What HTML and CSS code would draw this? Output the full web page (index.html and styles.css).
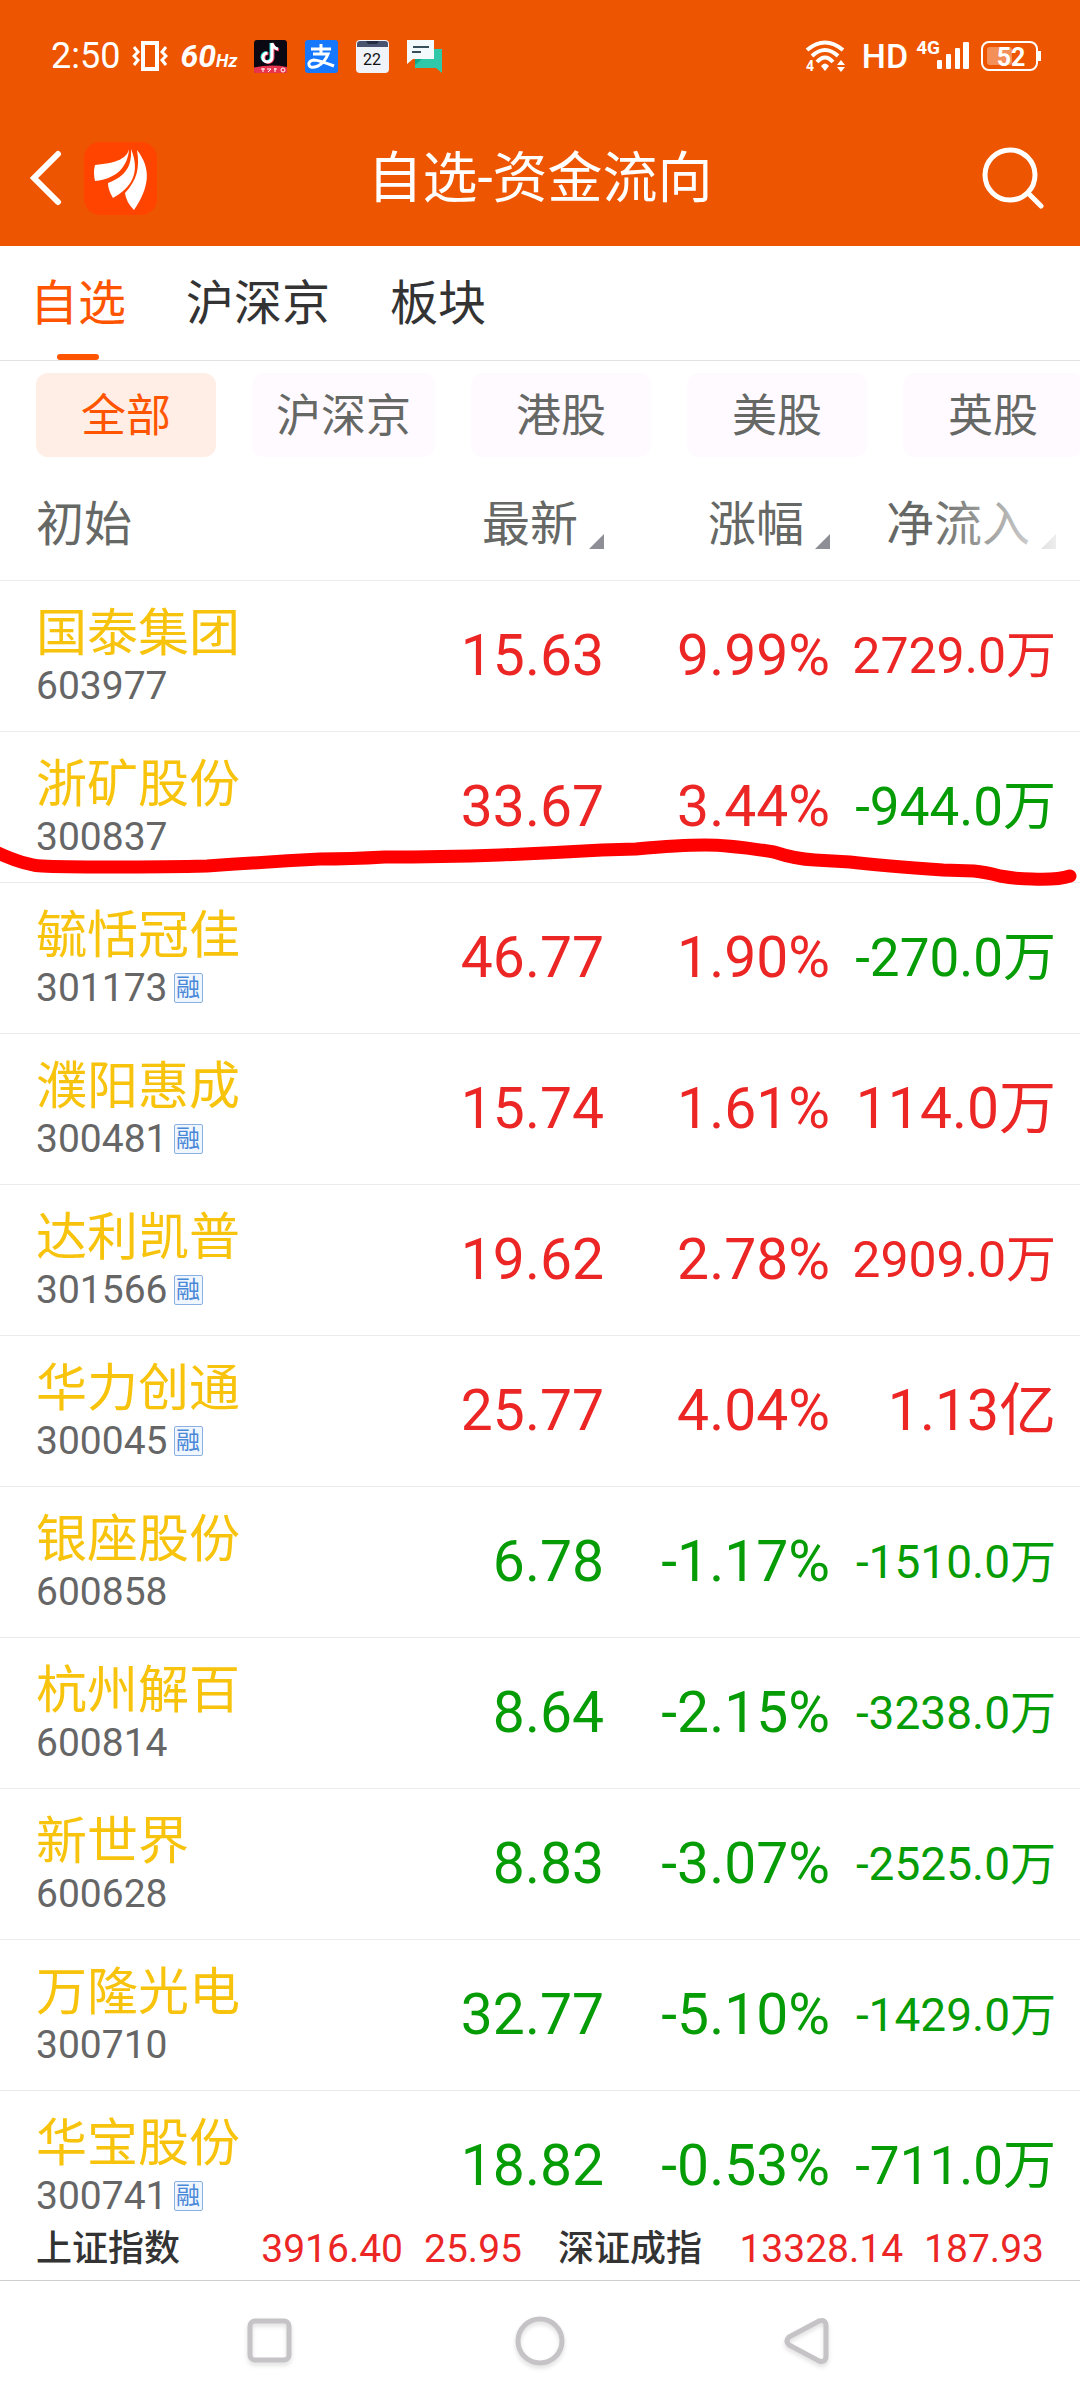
FILE: index.html
```html
<!DOCTYPE html>
<html lang="zh-CN">
<head>
  <meta charset="UTF-8">
  <meta name="viewport" content="width=device-width, initial-scale=1">
  <title>自选-资金流向</title>
  <link rel="stylesheet" href="styles.css">
</head>
<body>

<header class="top">
  <!-- STATUS BAR -->
  <div class="status">
    <div class="status-left">
      <span class="clock">2:50</span>
      <svg class="vibrate" width="36" height="32" viewBox="0 0 36 32" fill="none" stroke="#fff">
        <rect x="11" y="3" width="14" height="26" stroke-width="4"/>
        <path d="M2 7l4 5-4 4 4 4-4 5M34 7l-4 5 4 4-4 4 4 5" stroke-width="3"/>
      </svg>
      <span class="rate">60<small>Hz</small></span>
      <div class="apps">
        <svg width="33" height="33" viewBox="0 0 33 33">
          <rect width="33" height="33" rx="3" fill="#0b0713"/>
          <path d="M0 27.500Q17 24 33 27V31Q33 33 30 33H3Q0 33 0 31z" fill="#e8344e"/>
          <g fill="none" stroke-width="3">
            <path d="M17 3v14a4.500 4.500 0 1 1-4.500-4.500M17 3q1 5 6 6" stroke="#27e6e4"/>
            <path d="M19 4v14a4.500 4.500 0 1 1-4.500-4.500M19 4q1 5 6 6" stroke="#f8385c"/>
            <path d="M18 3v14.500a4.500 4.500 0 1 1-4.500-4.500M18 3q1 5 6 6" stroke="#fff"/>
          </g>
          <path d="M7 29h4M9 28v4M13 29h4M14 32l3-3M20 29h3M21 28v4" stroke="#fff"/>
          <circle cx="29" cy="30" r="2" fill="none" stroke="#fff"/>
        </svg>
        <svg width="33" height="33" viewBox="0 0 33 33" fill="none" stroke="#fff" stroke-width="3">
          <rect width="33" height="33" rx="3" fill="#1677ff" stroke="none"/>
          <path d="M6 9h20M16 4v10M8 14h15q-3 8-10 12-8 3-9-1-1-4 5-5 4 0 20 6"/>
        </svg>
        <svg width="33" height="33" viewBox="0 0 33 33">
          <rect width="33" height="33" rx="4" fill="#f1f3fb"/>
          <path d="M1 7V4q0-3 3-3h25q3 0 3 3v3z" fill="#4a5470"/>
          <path d="M10 1h13l-2 3h-9z" fill="#262c40"/>
          <text class="cal" x="16" y="25" text-anchor="middle">22</text>
        </svg>
        <svg width="35" height="33" viewBox="0 0 35 33">
          <path d="M8 9h27v24l-6-5H8z" fill="#2fc9aa"/>
          <path d="M8 19h19v-10l-19 16z" fill="#12a98c"/>
          <path d="M0 0h27v19H6l-6 5z" fill="#f3fafb"/>
          <path d="M6 7h16M5 12h9" stroke="#36505c" stroke-width="2"/>
        </svg>
      </div>
    </div>
    <div class="status-right">
      <svg class="wifi" width="40" height="32" viewBox="0 0 40 32" fill="none" stroke="#fff" stroke-width="4">
        <path d="M2 10Q20-5 38 10"/>
        <path d="M7 16Q20 4 33 16"/>
        <path d="M12 22Q20 13 28 22"/>
        <path d="M16 26q4-5 8 0l-4 5z" fill="#fff" stroke="none"/>
        <path d="M32 25l4-5 4 5zM32 27h8l-4 5z" fill="#fff" stroke="none"/>
        <text class="wifi-text" x="1" y="31">4</text>
      </svg>
      <span class="hd">HD</span>
      <span class="net">4G</span>
      <svg class="bars" width="32" height="28" viewBox="0 0 32 28" fill="#fff">
        <rect y="18" width="5" height="9" rx="1"/>
        <rect x="9" y="12" width="5" height="15" rx="1"/>
        <rect x="18" y="6" width="5" height="21" rx="1"/>
        <rect x="26" y="0" width="6" height="27" rx="1"/>
      </svg>
      <svg width="60" height="30" viewBox="0 0 60 30">
        <rect x="1" y="1" width="55" height="28" rx="7" fill="none" stroke="#fff" stroke-width="2"/>
        <rect x="6" y="6" width="25" height="18" rx="3" fill="#fff" opacity=".35"/>
        <rect x="57" y="10" width="3" height="10" fill="#fff"/>
        <text class="battery" x="30" y="25" text-anchor="middle">52</text>
      </svg>
    </div>
  </div>

  <!-- TITLE BAR -->
  <div class="titlebar">
    <div class="side">
      <button class="icon-btn" aria-label="返回">
        <svg width="32" height="56" viewBox="0 0 32 56" fill="none" stroke="#fff" stroke-width="6" stroke-linecap="round">
          <path d="M28 4L4 28l24 24"/>
        </svg>
      </button>
      <svg width="73" height="73" viewBox="0 0 73 73" fill="#fff">
        <rect width="73" height="73" rx="16" fill="#ff4400"/>
        <path d="M45 7C43 16 34 21 11 23q-2 7 0 16C33 37 44 24 45 7z"/>
        <path d="M47 7c1 17-5 27-23 34q0 7 5 15C47 46 57 31 47 7z"/>
        <path d="M53 8c3 18 0 30-12 43q1 9 9 17C65 46 68 27 53 8z"/>
      </svg>
    </div>
    <h1>自选-资金流向</h1>
    <div class="side side-end">
      <button class="icon-btn" aria-label="搜索">
        <svg width="68" height="62" viewBox="0 0 68 62" fill="none" stroke="#fff" stroke-width="5" stroke-linecap="round">
          <circle cx="28" cy="28" r="25"/>
          <path d="M46 46l13 13"/>
        </svg>
      </button>
    </div>
  </div>
</header>

<nav class="tabs">
  <a class="tab active" href="#">自选</a>
  <a class="tab" href="#">沪深京</a>
  <a class="tab" href="#">板块</a>
</nav>

<main class="content">
  <div class="chips">
    <button class="chip active">全部</button>
    <button class="chip">沪深京</button>
    <button class="chip">港股</button>
    <button class="chip">美股</button>
    <button class="chip">英股</button>
  </div>

  <div class="board">
    <table class="stocks">
      <thead>
        <tr>
          <th class="first"><button class="sort plain">初始</button></th>
          <th class="num"><button class="sort">最新</button></th>
          <th class="num"><button class="sort">涨幅</button></th>
          <th class="num flow fade"><button class="sort">净流入</button></th>
        </tr>
      </thead>
      <tbody id="rows"></tbody>
    </table>
    <!-- hand-drawn marker under the second stock -->
    <svg class="marker" viewBox="0 840 1080 60" preserveAspectRatio="none">
      <path d="M-4 852Q24 865 42 866Q60 867 110 867Q170 867 207 866Q265 862 320 859Q350 859 385 857Q440 857 500 855Q550 853 602 850L636 849Q680 845 705 845Q730 845 774 852Q795 859 815 860L850 862Q884 866 943 870L974 871Q985 872 1000 876Q1016 879 1032 879Q1058 880 1070 876"/>
    </svg>
  </div>
</main>

<footer>
  <div class="ticker">
    <div class="index"><strong>上证指数</strong><span>3916.40</span><span>25.95</span></div>
    <div class="index"><strong>深证成指</strong><span>13328.14</span><span>187.93</span></div>
  </div>
  <div class="sysnav">
    <button class="icon-btn" aria-label="最近任务">
      <svg width="52" height="52" viewBox="0 0 52 52"><rect x="6" y="6" width="39" height="39" rx="5"/></svg>
    </button>
    <button class="icon-btn" aria-label="主页">
      <svg width="52" height="52" viewBox="0 0 52 52"><circle cx="26" cy="26" r="22"/></svg>
    </button>
    <button class="icon-btn" aria-label="后退">
      <svg width="52" height="52" viewBox="0 0 52 52"><path d="M35 6L5 22q-4 4 0 8l30 16q7 2 7-5V11q0-7-7-5z"/></svg>
    </button>
  </div>
</footer>

<script src="script.js"></script>
</body>
</html>
```
FILE: styles.css
```css
* {
  box-sizing: border-box;
}
body {
  margin: 0;
  height: 100vh;
  display: flex;
  flex-direction: column;
  background: #fff;
  color: #333;
  font-family: Roboto, "Noto Sans CJK SC", sans-serif;
  overflow: hidden;
}
button {
  border: 0;
  padding: 0;
  background: none;
  color: inherit;
  font: inherit;
  cursor: pointer;
}
svg {
  display: block;
}

/* header */
.top {
  background: #ed5500;
  color: #fff;
  padding-bottom: 30px;
}
.status {
  display: flex;
  justify-content: space-between;
  align-items: center;
  height: 112px;
  padding: 0 39px 0 51px;
}
.status-left,
.status-right,
.apps {
  display: flex;
  align-items: center;
}
.clock {
  font-size: 36px;
}
.vibrate {
  margin: 0 12px;
}
.rate {
  font-size: 32px;
  font-weight: bold;
  font-style: italic;
}
.rate small {
  font-size: 18px;
}
.apps {
  gap: 18px;
  margin-left: 17px;
}
.cal {
  font-size: 16px;
  fill: #111;
}
.wifi {
  overflow: visible;
}
.wifi-text {
  font-size: 14px;
  font-weight: bold;
  fill: #fff;
  stroke: none;
}
.hd {
  margin: 0 8px 0 17px;
  font-size: 34px;
  font-weight: 500;
}
.net {
  align-self: flex-start;
  font-size: 19px;
  line-height: 24px;
  font-weight: bold;
}
.bars {
  margin: 0 12px 0 -3px;
}
.battery {
  font-size: 25px;
  font-weight: bold;
  fill: #fff;
}
.titlebar {
  display: flex;
  align-items: center;
  justify-content: space-between;
  height: 104px;
  padding: 28px 30px 0;
}
.titlebar h1 {
  margin: 0;
  font-size: 55px;
  line-height: 74px;
  font-weight: normal;
}
.side {
  display: flex;
  flex: 1;
  align-items: center;
  gap: 22px;
}
.side-end {
  justify-content: flex-end;
}

/* tabs */
.tabs {
  display: flex;
  gap: 60px;
  height: 115px;
  padding: 0 30px;
  border-bottom: 1px solid #e2e2e2;
}
.tab {
  position: relative;
  height: 114px;
  color: #333;
  font-size: 48px;
  line-height: 116px;
  text-decoration: none;
}
.tab.active {
  color: #ff5500;
}
.tab.active::after {
  content: "";
  position: absolute;
  left: 50%;
  bottom: 0;
  width: 42px;
  height: 6px;
  margin-left: -21px;
  border-radius: 3px;
  background: #ff5500;
}

/* filter chips */
.content {
  flex: 1;
  min-height: 0;
  overflow: hidden;
}
.chips {
  display: flex;
  gap: 36px;
  padding: 12px 0 0 36px;
  overflow: hidden;
}
.chip {
  flex: none;
  min-width: 180px;
  height: 84px;
  padding: 0 24px 6px;
  border-radius: 12px;
  background: #fefaff;
  color: #666865;
  font-size: 45px;
}
.chip.active {
  background: #ffeee6;
  color: #ff5500;
}

/* stock table */
.board {
  position: relative;
}
.stocks {
  width: 100%;
  table-layout: fixed;
  border-collapse: separate;
  border-spacing: 0;
}
.stocks th,
.stocks td {
  height: 151px;
  padding: 0;
  border-bottom: 1px solid #ececec;
  text-align: left;
  white-space: nowrap;
}
.stocks th {
  height: 124px;
  padding-top: 3px;
  color: #666865;
  font-size: 48px;
  font-weight: normal;
}
.stocks .first {
  padding-left: 36px;
}
.stocks td.first {
  padding-bottom: 4px;
}
.stocks .num {
  width: 226px;
  text-align: right;
  font-size: 57px;
}
.stocks td.num {
  line-height: 66px;
}
.stocks th.num {
  font-size: 48px;
}
.stocks .flow {
  width: 250px;
  padding-right: 24px;
}
/* long amounts step down so that they stay in their column */
.stocks .len-6 {
  font-size: 53px;
}
.stocks .len-7 {
  font-size: 50px;
}
.stocks .len-8 {
  font-size: 46px;
}
.sort::after {
  content: "";
  display: inline-block;
  width: 15px;
  height: 15px;
  margin-left: 11px;
  vertical-align: -8px;
  background: #8e8e96;
  clip-path: polygon(100% 0, 100% 100%, 0 100%);
}
.sort.plain::after {
  display: none;
}
.fade {
  position: relative;
}
.fade::after {
  content: "";
  position: absolute;
  top: 0;
  right: 0;
  bottom: 0;
  width: 150px;
  background: linear-gradient(to right, rgba(255, 255, 255, 0), #fff);
}
.name {
  display: block;
  color: #f8c30c;
  font-size: 51px;
  line-height: 64px;
}
.code {
  display: flex;
  align-items: center;
  gap: 6px;
  color: #666;
  font-size: 39px;
  line-height: 40px;
}
.badge {
  width: 29px;
  height: 30px;
  border: 1px solid #8ab0e4;
  border-radius: 2px;
  background: #f0f6fd;
  color: #4a88d8;
  font-size: 24px;
  line-height: 28px;
  text-align: center;
}
.up {
  color: #ec2525;
}
.down {
  color: #069c06;
}
.marker {
  position: absolute;
  top: 383px;
  left: 0;
  width: 100%;
  height: 60px;
  fill: none;
  stroke: #ff0000;
  stroke-width: 13px;
  stroke-linecap: round;
  pointer-events: none;
  overflow: visible;
}

/* index ticker and system navigation */
.ticker {
  display: grid;
  grid-template-columns: 1fr 1fr;
  gap: 36px;
  height: 65px;
  padding: 0 36px;
  border-bottom: 1px solid #cfcfcf;
  line-height: 66px;
}
.index {
  display: flex;
  gap: 21px;
  color: #ec2525;
  font-size: 39px;
}
.index strong {
  flex: 1;
  color: #333;
  font-size: 36px;
  font-weight: 500;
}
.sysnav {
  display: grid;
  grid-template-columns: repeat(3, 1fr);
  justify-items: center;
  align-items: center;
  height: 119px;
  padding: 0 135px;
}
.sysnav svg {
  fill: none;
  stroke: #c5c3c6;
  stroke-width: 5px;
  filter: drop-shadow(0 3px 2px rgba(0, 0, 0, 0.12));
}
```
FILE: script.js
```js
const stocks = [
  ["国泰集团", "603977", false, "15.63", "9.99%", "2729.0万"],
  ["浙矿股份", "300837", false, "33.67", "3.44%", "-944.0万"],
  ["毓恬冠佳", "301173", true, "46.77", "1.90%", "-270.0万"],
  ["濮阳惠成", "300481", true, "15.74", "1.61%", "114.0万"],
  ["达利凯普", "301566", true, "19.62", "2.78%", "2909.0万"],
  ["华力创通", "300045", true, "25.77", "4.04%", "1.13亿"],
  ["银座股份", "600858", false, "6.78", "-1.17%", "-1510.0万"],
  ["杭州解百", "600814", false, "8.64", "-2.15%", "-3238.0万"],
  ["新世界", "600628", false, "8.83", "-3.07%", "-2525.0万"],
  ["万隆光电", "300710", false, "32.77", "-5.10%", "-1429.0万"],
  ["华宝股份", "300741", true, "18.82", "-0.53%", "-711.0万"]
];

function tone(value) {
  return value.startsWith("-") ? "down" : "up";
}

// the minus sign is narrower than a digit
function sizeClass(value) {
  if (value.length === 8) return "len-8";
  if (value.length === 7) return value.startsWith("-") ? "len-6" : "len-7";
  return "";
}

let out = "";
stocks.forEach(([name, code, margin, price, change, flow]) => {
  const badge = margin ? `<span class="badge">融</span>` : "";
  out += `<tr>
    <td class="first"><span class="name">${name}</span><span class="code">${code}${badge}</span></td>
    <td class="num ${tone(change)}">${price}</td>
    <td class="num ${tone(change)}">${change}</td>
    <td class="num flow ${tone(flow)} ${sizeClass(flow)}">${flow}</td>
  </tr>`;
});
document.getElementById("rows").innerHTML = out;
```
